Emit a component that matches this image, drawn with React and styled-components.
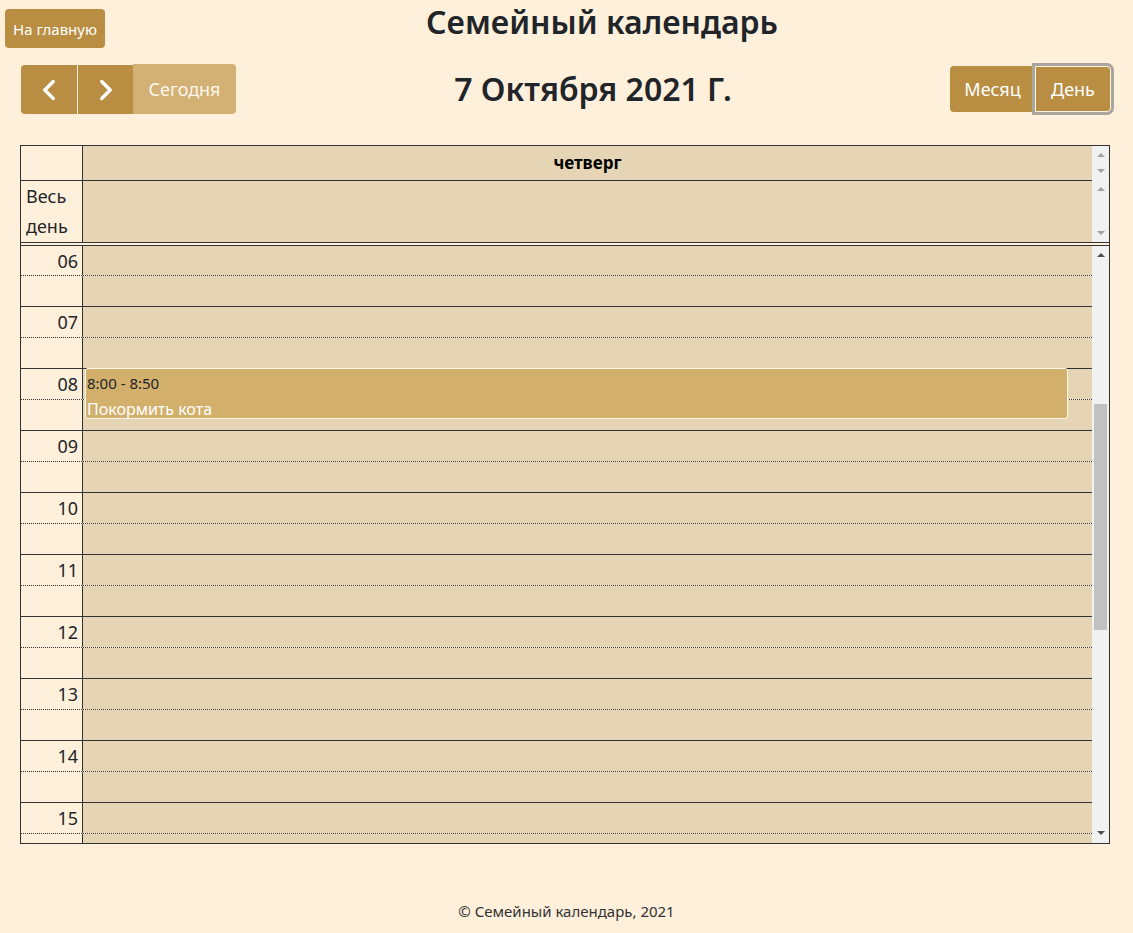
import React from 'react'
import styled, { createGlobalStyle } from 'styled-components'
import { ChevronLeft, ChevronRight } from 'lucide-react'

const GlobalStyle = createGlobalStyle`
  html, body {
    margin: 0;
    padding: 0;
    background: #fff0db;
    font-family: 'Noto Sans', 'Open Sans', sans-serif;
    color: #212529;
  }
  * { box-sizing: border-box; }
`

const hours = ['06', '07', '08', '09', '10', '11', '12', '13', '14', '15']

const App = () => {
  return (
    <Page>
      <GlobalStyle />
      <TopBar>
        <HomeButton>На главную</HomeButton>
        <SiteTitle>Семейный календарь</SiteTitle>
      </TopBar>

      <Toolbar>
        <ButtonGroup>
          <NavButton $first>
            <ChevronLeft size={34} strokeWidth={2.4} />
          </NavButton>
          <NavButton $divider>
            <ChevronRight size={34} strokeWidth={2.4} />
          </NavButton>
          <TodayButton>Сегодня</TodayButton>
        </ButtonGroup>
        <DateTitle>7 Октября 2021 Г.</DateTitle>
        <ViewGroup>
          <ViewButton $first>Месяц</ViewButton>
          <ViewButton $active>День</ViewButton>
        </ViewGroup>
      </Toolbar>

      <Frame>
        <HeaderSection>
          <AxisCell />
          <DayHeader>четверг</DayHeader>
          <Gutter>
            <Arrow $up $light />
            <Arrow $light />
          </Gutter>
          <AllDayLabel>
            Весь
            <br />
            день
          </AllDayLabel>
          <AllDayCell />
          <Gutter $tall>
            <Arrow $up $light />
            <Arrow $light />
          </Gutter>
        </HeaderSection>

        <Body>
          <TimeGrid>
            {hours.map((h) => (
              <HourRow key={h}>
                <Slot $dotted>
                  <TimeLabel>{h}</TimeLabel>
                  <SlotLane />
                </Slot>
                <Slot>
                  <TimeLabel />
                  <SlotLane />
                </Slot>
              </HourRow>
            ))}
            <Event>
              <EventTime>8:00 - 8:50</EventTime>
              <EventTitle>Покормить кота</EventTitle>
            </Event>
          </TimeGrid>
          <Scrollbar>
            <Arrow $up />
            <Thumb />
            <Arrow />
          </Scrollbar>
        </Body>
      </Frame>

      <Footer>© Семейный календарь, 2021</Footer>
    </Page>
  )
}

const Page = styled.div`
  width: 1133px;
  min-height: 933px;
`

const TopBar = styled.header`
  display: flex;
  align-items: flex-start;
  height: 48px;
`

const HomeButton = styled.button`
  margin: 9px 0 0 5px;
  height: 39px;
  padding: 0 8px;
  border: none;
  border-radius: 4px;
  background: #b98e42;
  color: #fff;
  font-family: inherit;
  font-size: 15px;
  white-space: nowrap;
`

const SiteTitle = styled.h2`
  flex: 1;
  margin: 3px 0 0;
  padding-right: 34px;
  text-align: center;
  font-size: 32px;
  font-weight: 600;
  line-height: 38px;
  color: #212529;
`

const Toolbar = styled.div`
  display: flex;
  justify-content: space-between;
  align-items: center;
  height: 50px;
  margin-top: 16px;
  padding: 0 22px 0 21px;
`

const ButtonGroup = styled.div`
  display: flex;
  height: 50px;
`

const NavButton = styled.button`
  width: 56px;
  height: 100%;
  display: flex;
  align-items: center;
  justify-content: center;
  padding: 0;
  border: none;
  border-top: 1px solid #fff3e2;
  border-left: ${(p) => (p.$divider ? '1px solid #fff3e2' : 'none')};
  border-radius: ${(p) => (p.$first ? '4px 0 0 4px' : '0')};
  background: #b98e42;
  color: #fff;
`

const TodayButton = styled.button`
  width: 103px;
  height: 100%;
  border: none;
  border-radius: 0 4px 4px 0;
  background: #d3b074;
  color: #fff8ee;
  font-family: inherit;
  font-size: 18px;
`

const DateTitle = styled.h2`
  margin: 0;
  font-size: 32px;
  font-weight: 600;
  line-height: 38px;
  color: #212529;
`

const ViewGroup = styled.div`
  display: flex;
  height: 46px;
`

const ViewButton = styled.button`
  height: 100%;
  width: ${(p) => (p.$first ? '85px' : '76px')};
  padding: 0 12px;
  border: ${(p) => (p.$active ? '1px solid #fff3e2' : 'none')};
  border-radius: ${(p) => (p.$first ? '4px 0 0 4px' : '0 4px 4px 0')};
  box-shadow: ${(p) => (p.$active ? '0 0 0 3px #aaa69e' : 'none')};
  background: #b98e42;
  color: #fff;
  font-family: inherit;
  font-size: 18px;
`

const Frame = styled.div`
  margin: 31px 23px 0 20px;
  border: 1px solid #333;
  background: #fff0db;
`

const HeaderSection = styled.div`
  display: grid;
  grid-template-columns: 62px 1fr 17px;
  grid-template-rows: 35px 61px;
  border-bottom: 1px solid #333;
`

const AxisCell = styled.div`
  border-right: 1px solid #333;
  border-bottom: 1px solid #333;
`

const DayHeader = styled.div`
  background: #e6d5b5;
  border-bottom: 1px solid #333;
  text-align: center;
  font-size: 17px;
  font-weight: 700;
  line-height: 34px;
  color: #000;
`

const AllDayLabel = styled.div`
  border-right: 1px solid #333;
  padding-left: 5px;
  font-size: 18px;
  line-height: 30px;
`

const AllDayCell = styled.div`
  background: #e6d5b5;
`

const Gutter = styled.div`
  background: #f1f1f1;
  display: flex;
  flex-direction: column;
  align-items: center;
  justify-content: space-between;
  padding: ${(p) => (p.$tall ? '6px 0 7px' : '7px 0 8px')};
`

const Arrow = styled.span`
  width: 0;
  height: 0;
  border-left: 4px solid transparent;
  border-right: 4px solid transparent;
  ${(p) =>
    p.$up
      ? `border-bottom: 4px solid ${p.$light ? '#a3a3a3' : '#505050'};`
      : `border-top: 4px solid ${p.$light ? '#a3a3a3' : '#505050'};`}
`

const Body = styled.div`
  display: flex;
  height: 598px;
  margin-top: 2px;
  border-top: 1px solid #333;
`

const TimeGrid = styled.div`
  position: relative;
  flex: 1;
  overflow: hidden;
`

const HourRow = styled.div`
  display: flex;
  flex-direction: column;

  &:first-child > div:first-child {
    height: 30px;
  }
`

const Slot = styled.div`
  display: grid;
  grid-template-columns: 62px 1fr;
  height: 31px;
  border-bottom: 1px ${(p) => (p.$dotted ? 'dotted' : 'solid')} #333;
`

const TimeLabel = styled.div`
  border-right: 1px solid #333;
  padding: 3px 4px 0 0;
  text-align: right;
  font-size: 18px;
  line-height: 24px;
  color: #212529;
`

const SlotLane = styled.div`
  background: #e6d5b5;
`

const Event = styled.div`
  position: absolute;
  top: 122px;
  left: 64px;
  right: 24px;
  height: 51px;
  padding: 2px 1px 0;
  border: 1px solid #fff6ea;
  border-radius: 3px;
  background: #d3af6c;
`

const EventTime = styled.div`
  font-size: 15px;
  line-height: 24px;
  color: #212529;
`

const EventTitle = styled.div`
  margin-top: 3px;
  font-size: 16px;
  line-height: 22px;
  color: #fff;
`

const Scrollbar = styled.div`
  position: relative;
  width: 17px;
  background: #f1f1f1;
  display: flex;
  flex-direction: column;
  align-items: center;
  justify-content: space-between;
  padding: 7px 0 8px;
`

const Thumb = styled.div`
  position: absolute;
  top: 158px;
  left: 2px;
  width: 13px;
  height: 226px;
  background: #c1c1c1;
`

const Footer = styled.footer`
  margin-top: 57px;
  text-align: center;
  font-size: 15px;
  line-height: 20px;
  color: #333;
`

export default App
